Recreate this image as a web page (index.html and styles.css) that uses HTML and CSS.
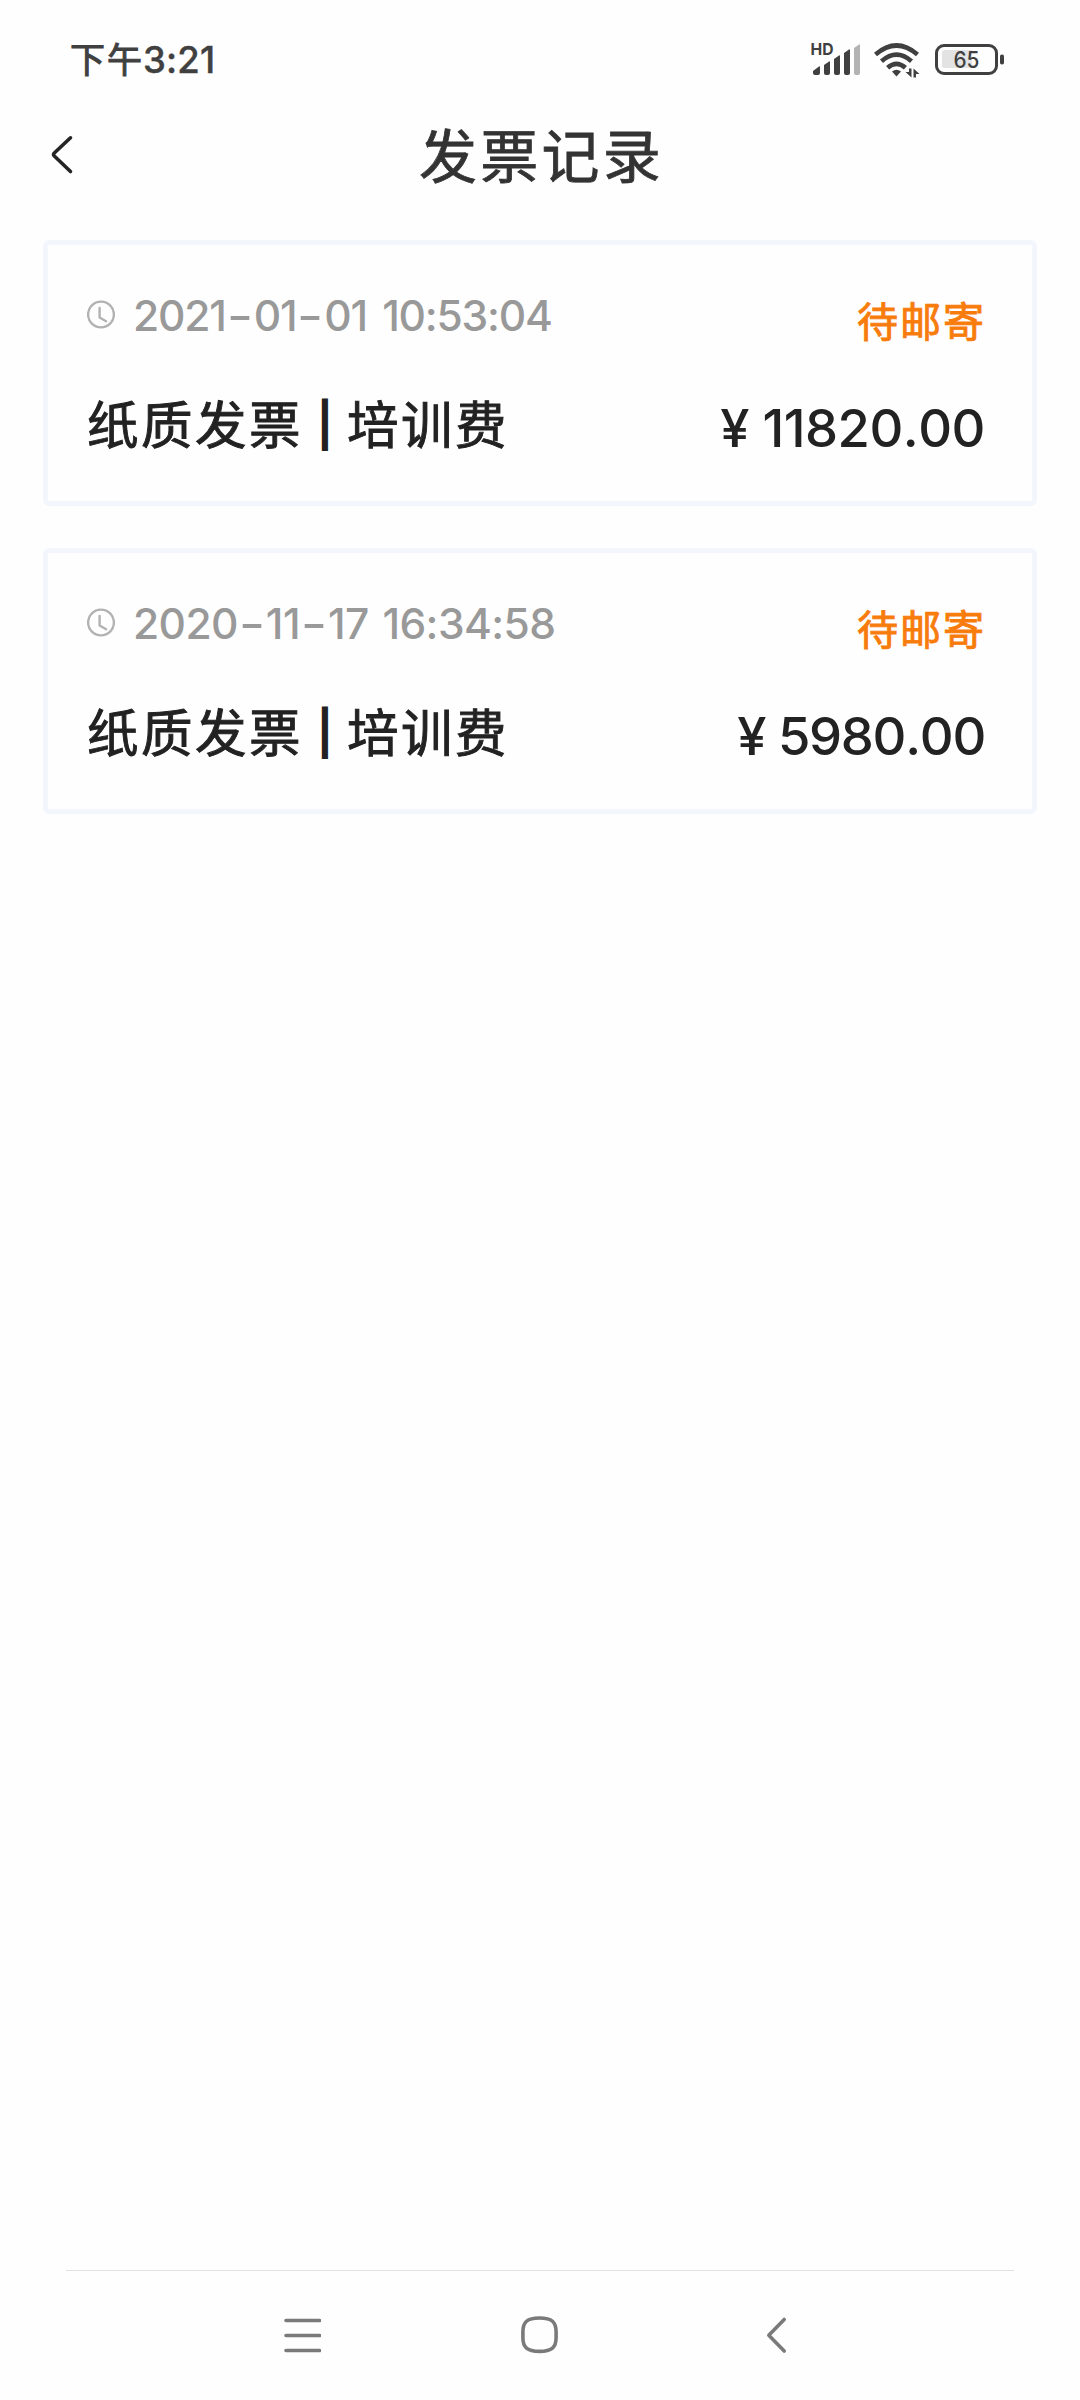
FILE: index.html
```html
<!DOCTYPE html>
<html lang="zh-CN">
<head>
<meta charset="utf-8">
<title>发票记录</title>
<link rel="stylesheet" href="styles.css">
</head>
<body>
<div class="status-bar">
  <div class="clock"><span class="clock-cjk">下午</span><span class="clock-num">3:21</span></div>
  <div class="indicators">
    <svg class="signal" width="52" height="46" viewBox="0 -8 52 46">
      <text class="hd" x="0.500" y="13" textLength="23" lengthAdjust="spacingAndGlyphs">HD</text>
      <g fill="#404040">
        <path d="M3 29l6-4.500q1-.5 1 .5v6q0 2-2 2H5q-2 0-2-2z"/>
        <path d="M14 23l5-3.500q1-.5 1 .5v11q0 2-2 2h-2q-2 0-2-2z"/>
        <path d="M24 17l5-3.500q1-.5 1 .5v17q0 2-2 2h-2q-2 0-2-2z"/>
        <path d="M34 11l5-3.500q1-.5 1 .5v23q0 2-2 2h-2q-2 0-2-2z"/>
      </g>
      <path fill="#b3b3b3" d="M44 6l5-3.500q1-.5 1 .5v28q0 2-2 2h-2q-2 0-2-2z"/>
    </svg>
    <svg class="wifi" width="48" height="38" viewBox="0 0 48 38">
      <g fill="none" stroke="#404040" stroke-width="4.600">
        <path d="M2.500 12.500Q23.500-5.500 44.500 12.500"/>
        <path d="M8.500 19.300Q23.500 6 38.500 19.300"/>
        <path d="M14.600 25.800Q23.500 18 32.400 25.800"/>
      </g>
      <path fill="#404040" d="M19 29.500q4.500-3.500 9 0l-4.500 5z"/>
      <path fill="#404040" d="M36 26.500h2.500v9L32.500 30H36zM40.500 35.500H43V32h3.500l-6-5.500z"/>
    </svg>
    <svg class="battery" width="70" height="32" viewBox="0 0 70 32">
      <rect x="1.500" y="1.500" width="60" height="28" rx="7.500" fill="none" stroke="#404040" stroke-width="3"/>
      <path fill="#e3e3e3" d="M10 6h27v18H10q-3 0-3-3V9q0-3 3-3z"/>
      <rect x="65" y="10.500" width="4" height="10" rx="1.800" fill="#404040"/>
      <text class="level" x="18.500" y="24" textLength="26" lengthAdjust="spacingAndGlyphs">65</text>
    </svg>
  </div>
</div>
<header class="nav">
  <svg class="back" width="24" height="42" viewBox="0 0 24 42"><path d="M20.500 3.800L4.300 19q-1.600 1.500 0 3L20.500 37.500" fill="none" stroke="#242424" stroke-width="3.600" stroke-linecap="round"/></svg>
  <h1 class="title">发票记录</h1>
</header>
<main class="list">
  <article class="card">
    <div class="row meta">
      <svg class="time-icon" width="28" height="30" viewBox="0 0 28 30"><circle cx="14" cy="14.500" r="12.900"/><path d="M12.600 8v9.500l6.500 3.700"/></svg>
      <time class="date">2021<i>-</i>01<i>-</i>01 10:53:04</time>
      <span class="state">待邮寄</span>
    </div>
    <div class="row main">
      <span class="name">纸质发票<b class="bar">|</b>培训费</span>
      <span class="price">¥ 11820.00</span>
    </div>
  </article>
  <article class="card">
    <div class="row meta">
      <svg class="time-icon" width="28" height="30" viewBox="0 0 28 30"><circle cx="14" cy="14.500" r="12.900"/><path d="M12.600 8v9.500l6.500 3.700"/></svg>
      <time class="date date-wide">2020<i>-</i>11<i>-</i>17 16:34:58</time>
      <span class="state">待邮寄</span>
    </div>
    <div class="row main">
      <span class="name">纸质发票<b class="bar">|</b>培训费</span>
      <span class="price price-tight">¥ 5980.00</span>
    </div>
  </article>
</main>
<footer class="system-nav">
  <svg width="38" height="42" viewBox="0 0 38 42"><path d="M3 5.500h33.500M3 20.500h33.500M3 35.500h33.500"/></svg>
  <svg width="40" height="42" viewBox="0 0 40 42"><path d="M19.500 3c12.500 0 16.600 4 16.600 14v5.400c0 10-4.100 14-16.600 14S2.900 32.400 2.900 22.400V17c0-10 4.100-14 16.600-14z"/></svg>
  <svg width="38" height="42" viewBox="0 0 38 42"><path d="M25.200 4.500L9.800 20.300L25.200 36"/></svg>
</footer>
</body>
</html>
```
FILE: styles.css
```css
* { box-sizing: border-box; }
body {
  margin: 0;
  width: 1080px;
  height: 2400px;
  display: flex;
  flex-direction: column;
  background: #fefefe;
  color: #222;
  font-family: Inter, "Noto Sans CJK SC", sans-serif;
}
.status-bar {
  height: 100px;
  padding: 34px 76px 0 70px;
  display: flex;
  justify-content: space-between;
  align-items: flex-start;
  color: #404040;
}
.clock {
  display: flex;
  padding-top: 6px;
  line-height: 40px;
  white-space: nowrap;
}
.clock-cjk { width: 73px; font-size: 35px; letter-spacing: 2px; -webkit-text-stroke: 1px; }
.clock-num { font-size: 36.500px; font-weight: 500; letter-spacing: .2px; -webkit-text-stroke: .4px; }
.indicators { display: flex; align-items: flex-start; }
.indicators svg { display: block; }
.signal { margin: 0 11px 0 0; }
.wifi { margin: 8px 14px 0 0; }
.battery { margin: 10px -1px 0 0; }
.hd { font-size: 16.500px; font-weight: 700; fill: #404040; }
.level { font-size: 23px; font-weight: 500; fill: #404040; }
.nav {
  height: 140px;
  padding: 17px 49px 0 50px;
  display: grid;
  grid-template-columns: 24px 1fr 22px;
  align-items: start;
}
.back { margin-top: 17px; }
.title {
  margin: 0;
  text-align: center;
  font-size: 58px;
  line-height: 80px;
  font-weight: 400;
  letter-spacing: 3.200px;
  color: #333;
  -webkit-text-stroke: .8px;
}
.list {
  flex: 1;
  padding: 0 43px;
  display: flex;
  flex-direction: column;
  gap: 42px;
}
.card {
  height: 266px;
  border: 5px solid #f4f6fd;
  border-radius: 6px;
  padding: 46px 46px 0 39px;
}
.row { display: flex; align-items: flex-start; }
.meta { height: 99px; }
.time-icon {
  display: block;
  margin: 9px 18px 0 0;
  fill: none;
  stroke: #b2b2b2;
  stroke-width: 2.400;
  stroke-linecap: round;
  stroke-linejoin: round;
}
.date {
  flex: 1;
  color: #999;
  font-size: 42.500px;
  line-height: 50px;
  font-weight: 500;
  font-kerning: none;
  letter-spacing: -1.200px;
  word-spacing: 5px;
  white-space: nowrap;
}
.date-wide { letter-spacing: -.600px; word-spacing: 3px; }
.date i {
  display: inline-block;
  width: 28px;
  text-align: center;
  font-style: normal;
  letter-spacing: 0;
  transform: scaleX(1.350);
}
.state {
  margin-top: 6px;
  color: #f87c0c;
  font-size: 41px;
  line-height: 50px;
  letter-spacing: 2px;
  -webkit-text-stroke: .9px;
}
.main { justify-content: space-between; }
.name {
  display: flex;
  font-size: 51.500px;
  line-height: 70px;
  letter-spacing: 2.500px;
  -webkit-text-stroke: .9px;
}
.bar {
  width: 44px;
  font-size: 44px;
  font-weight: 700;
  letter-spacing: 0;
  text-align: center;
  -webkit-text-stroke: 0;
}
.price {
  margin: 3px 1px 0 0;
  font-size: 52.500px;
  line-height: 70px;
  font-weight: 500;
  font-kerning: none;
  letter-spacing: -.500px;
}
.price-tight { letter-spacing: -1.300px; }
.system-nav {
  height: 130px;
  margin: 0 66px;
  padding: 44px 0 0 217px;
  border-top: 1px solid #e2e2e2;
  display: flex;
  gap: 199px;
  fill: none;
  stroke: #7a7a7a;
  stroke-width: 3.600;
  stroke-linecap: round;
  stroke-linejoin: round;
}
```
